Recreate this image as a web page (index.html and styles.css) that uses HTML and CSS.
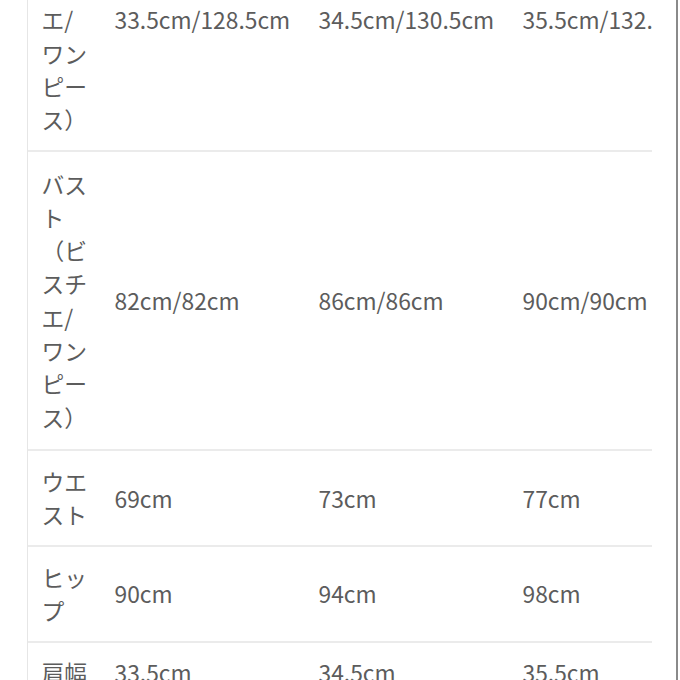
FILE: index.html
```html
<!DOCTYPE html>
<html lang="ja">
<head>
<meta charset="utf-8">
<link rel="stylesheet" href="styles.css">
</head>
<body>
<div class="frame">
  <div class="scroller">
    <table class="size-table">
      <tr>
        <td class="label">着丈（ビスチエ/ワンピース）</td>
        <td class="val">33.5cm/128.5cm</td>
        <td class="val">34.5cm/130.5cm</td>
        <td class="val">35.5cm/132.5cm</td>
      </tr>
      <tr class="tall">
        <td class="label">バスト（ビスチエ/ワンピース）</td>
        <td class="val">82cm/82cm</td>
        <td class="val">86cm/86cm</td>
        <td class="val">90cm/90cm</td>
      </tr>
      <tr>
        <td class="label">ウエスト</td>
        <td class="val">69cm</td>
        <td class="val">73cm</td>
        <td class="val">77cm</td>
      </tr>
      <tr>
        <td class="label">ヒップ</td>
        <td class="val">90cm</td>
        <td class="val">94cm</td>
        <td class="val">98cm</td>
      </tr>
      <tr>
        <td class="label">肩幅</td>
        <td class="val">33.5cm</td>
        <td class="val">34.5cm</td>
        <td class="val">35.5cm</td>
      </tr>
    </table>
  </div>
</div>
</body>
</html>
```
FILE: styles.css
```css
html, body {
  margin: 0;
  padding: 0;
  background: #fff;
}
body {
  font-family: "Noto Sans CJK JP", "Noto Sans", sans-serif;
  color: #5c5c5c;
  font-size: 22.8px;
  line-height: 33.3px;
  height: 680px;
  overflow: hidden;
}
.frame {
  width: 678px;
  height: 680px;
  border-right: 2px solid #8a8a8a;
  box-sizing: border-box;
  padding-left: 27px;
}
.scroller {
  width: 625px;
  height: 680px;
  overflow: hidden;
  border-left: 1px solid #e6e6e6;
  box-sizing: border-box;
}
.size-table {
  border-collapse: collapse;
  margin-top: -110px;
  table-layout: fixed;
}
.size-table td {
  padding: 13.5px 13.5px;
  border-bottom: 2px solid #ebebeb;
  vertical-align: middle;
}
.size-table .tall td {
  padding-top: 15.5px;
  padding-bottom: 15.5px;
}
.size-table .label {
  width: 46px;
  min-width: 46px;
  max-width: 46px;
  word-break: break-all;
}
.size-table .val {
  width: 177px;
  min-width: 177px;
  white-space: nowrap;
}
```
